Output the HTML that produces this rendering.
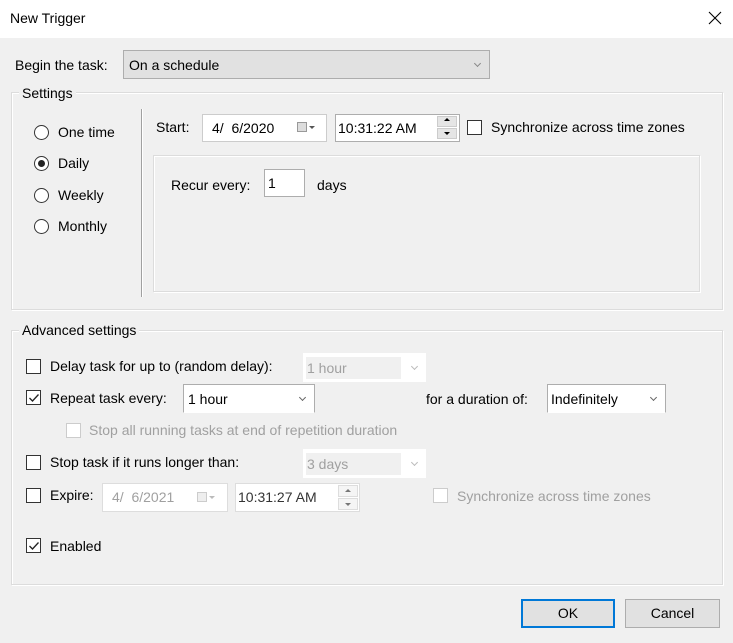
<!DOCTYPE html>
<html><head><meta charset="utf-8"><style>
*{box-sizing:border-box;margin:0;padding:0}
body{width:733px;height:643px;background:#f0f0f0;font-family:"Liberation Sans",Arial,sans-serif;font-size:14px;color:#000;position:relative;overflow:hidden}
.a{position:absolute}
.t{position:absolute;height:18px;line-height:18px;white-space:nowrap}
.g{color:#a0a0a0}
.grp{position:absolute;border:1px solid #dcdcdc;box-shadow:inset 1px 1px 0 #fff,1px 1px 0 #fff}
.lbl{position:absolute;background:#f0f0f0;padding:0 3px;height:18px;line-height:18px}
.cb{position:absolute;width:15px;height:15px;border:1px solid #333;background:#fff}
.cbd{border-color:#ccc}
.rd{position:absolute;width:15px;height:15px;border:1px solid #333;border-radius:50%;background:#fff}
.box{position:absolute;background:#fff;border:1px solid #adadad}
.dis{border-color:#ccc}
.chev{position:absolute;width:5px;height:5px;border-right:1px solid #666;border-bottom:1px solid #666;transform:rotate(45deg)}
.btn{position:absolute;background:#e1e1e1;border:1px solid #adadad;text-align:center;line-height:25px}
</style></head><body>
<div class="a" style="left:0;top:0;width:733px;height:38px;background:#fff"></div>
<div class="t" style="left:10px;top:9px;font-size:14px">New Trigger</div>
<svg class="a" style="left:708px;top:11px" width="14" height="14"><path d="M1 1L13 13M13 1L1 13" stroke="#000" stroke-width="1.1"/></svg>

<div class="t" style="left:15px;top:56px">Begin the task:</div>
<div class="a" style="left:123px;top:50px;width:367px;height:29px;background:#e1e1e1;border:1px solid #adadad"></div>
<div class="t" style="left:129px;top:56px">On a schedule</div>
<div class="chev" style="left:475px;top:61px;border-color:#888"></div>

<div class="grp" style="left:11px;top:92px;width:712px;height:218px"></div>
<div class="lbl" style="left:19px;top:84px">Settings</div>
<div class="a" style="left:141px;top:109px;width:2px;height:188px;background:#a0a0a0;border-right:1px solid #fff"></div>

<div class="rd" style="left:34px;top:125px"></div><div class="t" style="left:58px;top:123px">One time</div>
<div class="rd" style="left:34px;top:156px"></div><div class="a" style="left:38px;top:160px;width:7px;height:7px;border-radius:50%;background:#222"></div><div class="t" style="left:58px;top:154px">Daily</div>
<div class="rd" style="left:34px;top:188px"></div><div class="t" style="left:58px;top:186px">Weekly</div>
<div class="rd" style="left:34px;top:219px"></div><div class="t" style="left:58px;top:217px">Monthly</div>

<div class="t" style="left:156px;top:118px">Start:</div>
<div class="box" style="left:202px;top:114px;width:125px;height:28px;border-color:#ccc"></div>
<div class="t" style="left:212px;top:119px">4/&nbsp; 6/2020</div>
<div class="a" style="left:297px;top:122px;width:10px;height:10px;border:1px solid #999;background:#ddd"></div>
<div class="a" style="left:309px;top:126px;border:3px solid transparent;border-top:3px solid #555"></div>
<div class="box" style="left:335px;top:114px;width:125px;height:28px"></div>
<div class="t" style="left:338px;top:119px">10:31:22 AM</div>
<div class="a" style="left:437px;top:116px;width:20px;height:11px;background:#e5e5e5;border:1px solid #ccc"></div>
<div class="a" style="left:437px;top:128px;width:20px;height:11px;background:#e5e5e5;border:1px solid #ccc"></div>
<div class="a" style="left:444px;top:118px;border:3px solid transparent;border-bottom:3px solid #000;border-top:0"></div>
<div class="a" style="left:444px;top:132px;border:3px solid transparent;border-top:3px solid #000;border-bottom:0"></div>
<div class="cb" style="left:467px;top:120px"></div>
<div class="t" style="left:491px;top:118px">Synchronize across time zones</div>

<div class="grp" style="left:153px;top:155px;width:547px;height:137px"></div>
<div class="t" style="left:171px;top:176px">Recur every:</div>
<div class="box" style="left:264px;top:169px;width:41px;height:28px"></div>
<div class="t" style="left:268px;top:174px">1</div>
<div class="t" style="left:317px;top:176px">days</div>

<div class="grp" style="left:11px;top:330px;width:712px;height:255px"></div>
<div class="lbl" style="left:19px;top:321px">Advanced settings</div>

<div class="cb" style="left:26px;top:359px"></div>
<div class="t" style="left:50px;top:357px">Delay task for up to (random delay):</div>
<div class="a" style="left:303px;top:353px;width:123px;height:29px;background:#fff"></div>
<div class="a" style="left:306px;top:357px;width:95px;height:22px;background:#f0f0f0"></div>
<div class="t g" style="left:307px;top:359px">1 hour</div>
<div class="chev" style="left:412px;top:364px;border-color:#bbb"></div>

<div class="cb" style="left:26px;top:390px"></div>
<svg class="a" style="left:28px;top:392px" width="12" height="12"><path d="M1.5 6L4.5 9L10.5 2.5" stroke="#222" stroke-width="1.3" fill="none"/></svg>
<div class="t" style="left:50px;top:389px">Repeat task every:</div>
<div class="box" style="left:183px;top:384px;width:132px;height:29px;border-bottom-color:#fff;border-right-color:#adadad"></div>
<div class="t" style="left:188px;top:390px">1 hour</div>
<div class="chev" style="left:300px;top:395px"></div>
<div class="t" style="left:426px;top:390px">for a duration of:</div>
<div class="box" style="left:547px;top:384px;width:119px;height:29px;border-bottom-color:#fff"></div>
<div class="t" style="left:551px;top:390px">Indefinitely</div>
<div class="chev" style="left:651px;top:395px"></div>

<div class="cb cbd" style="left:66px;top:423px"></div>
<div class="t g" style="left:89px;top:421px">Stop all running tasks at end of repetition duration</div>

<div class="cb" style="left:26px;top:455px"></div>
<div class="t" style="left:50px;top:453px">Stop task if it runs longer than:</div>
<div class="a" style="left:303px;top:449px;width:123px;height:29px;background:#fff"></div>
<div class="a" style="left:306px;top:453px;width:95px;height:22px;background:#f0f0f0"></div>
<div class="t g" style="left:307px;top:455px">3 days</div>
<div class="chev" style="left:412px;top:460px;border-color:#bbb"></div>

<div class="cb" style="left:26px;top:488px"></div>
<div class="t" style="left:50px;top:486px">Expire:</div>
<div class="box dis" style="left:102px;top:483px;width:126px;height:29px;border-color:#ddd"></div>
<div class="t g" style="left:112px;top:488px">4/&nbsp; 6/2021</div>
<div class="a" style="left:197px;top:492px;width:10px;height:10px;border:1px solid #ccc;background:#eee"></div>
<div class="a" style="left:209px;top:496px;border:3px solid transparent;border-top:3px solid #bbb"></div>
<div class="box" style="left:235px;top:483px;width:125px;height:29px;border-color:#ddd"></div>
<div class="t" style="left:238px;top:488px;color:#333">10:31:27 AM</div>
<div class="a" style="left:338px;top:485px;width:20px;height:12px;background:#f5f5f5;border:1px solid #ddd"></div>
<div class="a" style="left:338px;top:498px;width:20px;height:12px;background:#f5f5f5;border:1px solid #ddd"></div>
<div class="a" style="left:345px;top:489px;border:3px solid transparent;border-bottom:3px solid #777;border-top:0"></div>
<div class="a" style="left:345px;top:503px;border:3px solid transparent;border-top:3px solid #777;border-bottom:0"></div>
<div class="cb cbd" style="left:433px;top:488px"></div>
<div class="t g" style="left:457px;top:487px">Synchronize across time zones</div>

<div class="cb" style="left:26px;top:538px"></div>
<svg class="a" style="left:28px;top:540px" width="12" height="12"><path d="M1.5 6L4.5 9L10.5 2.5" stroke="#222" stroke-width="1.3" fill="none"/></svg>
<div class="t" style="left:50px;top:537px">Enabled</div>

<div class="btn" style="left:521px;top:599px;width:94px;height:29px;border:2px solid #0078d7">OK</div>
<div class="btn" style="left:625px;top:599px;width:95px;height:29px;line-height:27px">Cancel</div>
</body></html>
